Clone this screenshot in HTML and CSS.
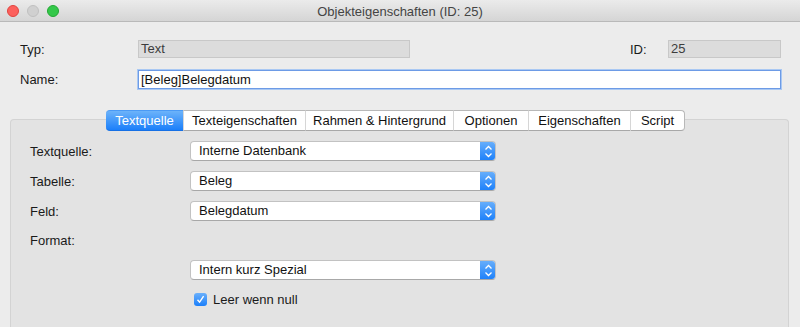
FILE: index.html
```html
<!DOCTYPE html>
<html lang="de">
<head>
<meta charset="utf-8">
<title>Objekteigenschaften (ID: 25)</title>
<link rel="stylesheet" href="styles.css">
</head>
<body>
<div class="window">
  <div class="titlebar">
    <div class="lights">
      <span class="light red"></span>
      <span class="light grey"></span>
      <span class="light green"></span>
    </div>
    <div class="title">Objekteigenschaften (ID: 25)</div>
    <div></div>
  </div>

  <div class="top">
    <div class="row">
      <label class="lbl">Typ:</label>
      <div class="field ro typ">Text</div>
      <div class="spacer"></div>
      <label class="lbl id-lbl">ID:</label>
      <div class="field ro idf">25</div>
    </div>
    <div class="row">
      <label class="lbl">Name:</label>
      <div class="field focus">[Beleg]Belegdatum</div>
    </div>
  </div>

  <div class="tabview">
    <div class="tabs">
      <div class="tab active t1">Textquelle</div>
      <div class="tab t2">Texteigenschaften</div>
      <div class="tab t3">Rahmen &amp; Hintergrund</div>
      <div class="tab t4">Optionen</div>
      <div class="tab t5">Eigenschaften</div>
      <div class="tab t6">Script</div>
    </div>
    <div class="panel">
      <div class="grid">
        <div class="plbl">Textquelle:</div>
        <div class="popup"><span class="ptext">Interne Datenbank</span><span class="arrows"><svg width="16" height="20" viewBox="0 0 16 20"><path d="M5.5 8.5 L8.5 5.5 L11.5 8.5 M5.5 12.5 L8.5 15.5 L11.5 12.5" fill="none" stroke="#fff" stroke-width="1.3"/></svg></span></div>

        <div class="plbl">Tabelle:</div>
        <div class="popup"><span class="ptext">Beleg</span><span class="arrows"><svg width="16" height="20" viewBox="0 0 16 20"><path d="M5.5 8.5 L8.5 5.5 L11.5 8.5 M5.5 12.5 L8.5 15.5 L11.5 12.5" fill="none" stroke="#fff" stroke-width="1.3"/></svg></span></div>

        <div class="plbl">Feld:</div>
        <div class="popup"><span class="ptext">Belegdatum</span><span class="arrows"><svg width="16" height="20" viewBox="0 0 16 20"><path d="M5.5 8.5 L8.5 5.5 L11.5 8.5 M5.5 12.5 L8.5 15.5 L11.5 12.5" fill="none" stroke="#fff" stroke-width="1.3"/></svg></span></div>

        <div class="plbl">Format:</div>
        <div></div>

        <div></div>
        <div class="popup"><span class="ptext">Intern kurz Spezial</span><span class="arrows"><svg width="16" height="20" viewBox="0 0 16 20"><path d="M5.5 8.5 L8.5 5.5 L11.5 8.5 M5.5 12.5 L8.5 15.5 L11.5 12.5" fill="none" stroke="#fff" stroke-width="1.3"/></svg></span></div>

        <div></div>
        <div class="check">
          <span class="box"><svg width="13" height="13" viewBox="0 0 13 13"><path d="M3.5 6.8 L5.6 9.2 L9.6 3.2" fill="none" stroke="#fff" stroke-width="1.4"/></svg></span>
          <span>Leer wenn null</span>
        </div>
      </div>
    </div>
  </div>
</div>
</body>
</html>
```

FILE: styles.css
```css
html, body {
  margin: 0;
  padding: 0;
}
body {
  width: 800px;
  height: 327px;
  overflow: hidden;
  background: #ececec;
  font-family: "Liberation Sans", Arial, sans-serif;
  font-size: 13px;
  color: #1a1a1a;
}
.window {
  display: flex;
  flex-direction: column;
  height: 327px;
}
.titlebar {
  height: 21px;
  border-bottom: 1px solid #b9b9b9;
  background: linear-gradient(#ebebeb, #d5d5d5);
  display: grid;
  grid-template-columns: 1fr auto 1fr;
  align-items: center;
}
.lights {
  display: flex;
  gap: 8px;
  padding-left: 7px;
}
.light {
  width: 12px;
  height: 12px;
  border-radius: 50%;
  box-sizing: border-box;
}
.red { background: #fc605c; border: 1px solid #e0443f; }
.grey { background: #d0d0d0; border: 1px solid #c0c0c0; }
.green { background: #34c84a; border: 1px solid #23a834; }
.title {
  color: #444;
  font-size: 13px;
  padding-top: 1px;
}

.top {
  padding: 18px 19px 0 20px;
  display: flex;
  flex-direction: column;
  gap: 12px;
}
.row {
  display: flex;
  align-items: center;
}
.lbl {
  width: 118px;
  flex: none;
}
.spacer { flex: 1; }
.id-lbl { width: 38px; }
.field {
  box-sizing: border-box;
  height: 18px;
  line-height: 16px;
  padding-left: 2px;
}
.ro {
  background: #dcdcdc;
  border: 1px solid #c8c8c8;
  color: #3c3c3c;
}
.typ { width: 272px; }
.idf { width: 113px; }
.focus {
  flex: 1;
  height: 19px;
  background: #fff;
  border: 1px solid #6d9be6;
  box-shadow: 0 0 0 1px #a9c8f3;
  line-height: 17px;
  color: #111;
}

.tabview {
  margin: 21px 11px 0 10px;
  flex: 1;
  display: flex;
  flex-direction: column;
}
.tabs {
  display: flex;
  padding-left: 96px;
  margin-bottom: -12px;
  position: relative;
  z-index: 1;
}
.tab {
  box-sizing: border-box;
  height: 21px;
  line-height: 19px;
  text-align: center;
  white-space: nowrap;
  background: #fff;
  border-top: 1px solid #b8b8b8;
  border-bottom: 1px solid #a8a8a8;
  border-left: 1px solid #d6d6d6;
  color: #111;
}
.tab:first-child {
  border-left: none;
  border-radius: 4px 0 0 4px;
}
.tab:last-child {
  border-right: 1px solid #b8b8b8;
  border-radius: 0 4px 4px 0;
}
.t1 { width: 77px; }
.t2 { width: 122px; }
.t3 { width: 148px; }
.t4 { width: 75px; }
.t5 { width: 102px; }
.t6 { width: 55px; }
.tab.active {
  background: linear-gradient(#6cb3fa, #1b7ffa);
  color: #fff;
  border-top-color: #4a9af5;
  border-bottom-color: #1670e5;
}
.panel {
  flex: 1;
  background: #e3e3e3;
  border: 1px solid #d3d3d3;
  border-bottom: none;
  border-radius: 4px 4px 0 0;
}
.grid {
  display: grid;
  grid-template-columns: 160px 306px;
  grid-template-rows: 20px 20px 20px 19px 20px 19px;
  row-gap: 10px;
  padding: 21px 0 0 19px;
  align-items: center;
}
.popup {
  height: 20px;
  box-sizing: border-box;
  background: #fff;
  border: 1px solid #c2c2c2;
  border-bottom-color: #a8a8a8;
  border-radius: 4px;
  display: flex;
  align-items: stretch;
  overflow: hidden;
}
.ptext {
  flex: 1;
  padding-left: 8px;
  line-height: 18px;
  color: #111;
}
.arrows {
  width: 16px;
  margin: -1px -1px -1px 0;
  background: linear-gradient(#6ab0fb, #1b7ffa);
  display: flex;
  align-items: center;
}
.arrows svg { display: block; }
.check {
  display: flex;
  align-items: center;
  gap: 6px;
  padding-left: 4px;
}
.box {
  width: 13px;
  height: 13px;
  border-radius: 3px;
  background: linear-gradient(#6ab0fb, #1b7ffa);
  display: block;
}
.box svg { display: block; }
```
